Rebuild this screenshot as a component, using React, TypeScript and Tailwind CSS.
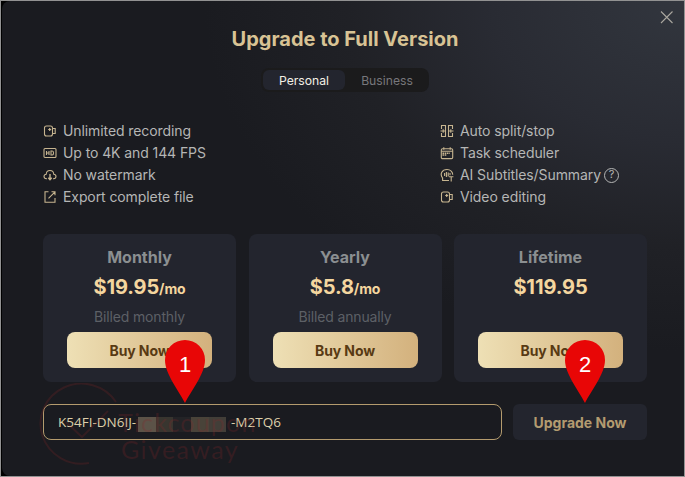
import type { ReactNode } from "react";

function Icon({ children }: { children: ReactNode }) {
  return (
    <svg width="14" height="14" viewBox="0 0 14 14" fill="none" stroke="#c7b590" strokeWidth="1.1" className="shrink-0">
      {children}
    </svg>
  );
}

const Recorder = () => (
  <Icon>
    <rect x="1.5" y="2" width="8" height="10" rx="2" />
    <path d="M9.5 4.5h2.7v5H9.5" />
    <path d="M6.7 4v3M5.2 5.5h3" strokeWidth="1.2" />
  </Icon>
);

const Hd = () => (
  <Icon>
    <rect x="1" y="2.5" width="12" height="9" rx="1" />
    <path d="M3.5 5v4M6 5v4M3.5 7H6M8 5h1.2c1.8 0 1.8 4 0 4H8z" />
  </Icon>
);

const Cloud = () => (
  <Icon>
    <path d="M4 10.8H3.4C.3 10.5.2 6.6 3.2 6.2c.3-5 7.2-5 7.6 0 3 .4 2.9 4.3-.2 4.6H10" />
    <path d="M7 6v5.5M5.3 9.7 7 11.6l1.7-1.9" strokeWidth="1.4" />
  </Icon>
);

const Export = () => (
  <Icon>
    <path d="M5.5 1.8H2v10.4h10V8M8.5 1.8H12v3.5M12 1.8 5.5 8.3" />
  </Icon>
);

const Split = () => (
  <Icon>
    <path d="M1.5 5V1.5h4v11h-4V9M12.5 5V1.5h-4v11h4V9M.5 7h5M13.5 7h-5M3.2 5.3v3.4M10.8 5.3v3.4" />
  </Icon>
);

const Calendar = () => (
  <Icon>
    <rect x="1.3" y="2.8" width="11.4" height="9.8" rx="1.2" />
    <path d="M1.3 5.2h11.4M3.8 1.2v2.6M10.2 1.2v2.6" />
    <path d="M2.5 7.2h7.3M2.5 9h4.4" strokeWidth="1.5" strokeDasharray="1.6 .6" />
  </Icon>
);

const Subtitles = () => (
  <Icon>
    <path d="M9 12.5H2.6V10C-.5 6 2 1.5 7 1.5c3.5 0 5.8 2.3 5.7 5.3M4.6 5v3M6.4 4v5M8.2 4.5v4M10 5v2.2M9 8.8h4.4M11.2 8.8v4.6" />
  </Icon>
);

function Feature({ icon, text, help }: { icon: ReactNode; text: string; help?: boolean }) {
  return (
    <li className="flex h-[22px] items-center">
      {icon}
      <span className="ml-[6px]">{text}</span>
      {help && (
        <span className="ml-[3px] flex size-[15px] items-center justify-center rounded-full border border-[#b5b6b5] text-[11px]">?</span>
      )}
    </li>
  );
}

function Plan({ name, price, unit, note }: { name: string; price: string; unit?: string; note?: string }) {
  return (
    <section className="flex h-[148px] w-[193px] flex-col items-center rounded-lg bg-[#23252e] pt-3">
      <h2 className="h-6 text-base leading-[22px] font-bold text-[#8b8f91]">{name}</h2>
      <p className="h-[34px] text-xl leading-[34px] font-bold tracking-[-0.1px] text-[#f4d69f]">
        {price}
        {unit && <span className="text-sm">{unit}</span>}
      </p>
      <p className="h-7 text-sm leading-[25px] tracking-[-0.15px] text-[#5d6066]">{note}</p>
      <button className="h-9 w-[145px] rounded-lg bg-linear-to-r from-[#eee0b5] to-[#d3b17d] pt-px text-sm font-bold tracking-[-0.1px] text-[#583a13]">
        Buy Now
      </button>
    </section>
  );
}

function Pin({ label, className }: { label: string; className: string }) {
  return (
    <div className={className}>
      <svg width="40" height="63" viewBox="0 0 40 63" className="absolute inset-0">
        <path d="M20 63C14 51 0 34 0 20a20 20 0 0 1 40 0C40 34 26 51 20 63Z" fill="#e80606" />
      </svg>
      <span className="relative">{label}</span>
    </div>
  );
}

function Watermark() {
  return (
    <div className="absolute top-[382px] left-[37px] h-[84px] w-[215px]">
      <svg width="84" height="84" viewBox="0 0 84 84" fill="none" stroke="#862629" strokeOpacity="0.23" strokeWidth="2">
        <path d="M77 19A41 40 0 1 0 50 80M27 39 43 54 69 28" />
      </svg>
      <span className="absolute top-[24px] left-[79px] font-['Lato',sans-serif] text-[25px] leading-[30px] tracking-[1.2px] text-[#862629]/25">
        Tickcoupon
      </span>
      <span className="absolute top-[51px] left-[82px] font-['Lato',sans-serif] text-[25px] leading-[30px] tracking-[1.4px] text-[#862629]/25">
        Giveaway
      </span>
    </div>
  );
}

export default function App() {
  return (
    <div className="h-[477px] w-[685px] border border-[#929292] bg-black font-['Inter',sans-serif]">
      <main className="relative ml-px flex h-full w-[682px] flex-col overflow-hidden rounded-l-lg bg-[#1a1b20] bg-[radial-gradient(ellipse_480px_350px_at_100%_0%,#32363e_0%,#292b33_40%,#202126_70%,#1a1b20_100%)] pl-[41px]">
        <svg width="14" height="14" viewBox="0 0 14 14" className="absolute top-[9px] right-[10px]" fill="none" stroke="#a9a69e" strokeWidth="1.1">
          <path d="M1 1.5 12.5 13M12.5 1.5 1 13" />
        </svg>
        <div className="flex w-[604px] flex-col items-center">
          <h1 className="mt-[23px] h-[30px] text-xl leading-[30px] font-bold text-[#d8c394]">Upgrade to Full Version</h1>
          <div className="mt-[14px] flex h-6 w-[168px] rounded-lg bg-[#1b1b1c] p-0.5 text-[12.2px] leading-[21px]">
            <span className="h-5 w-[82px] rounded-md bg-[#23252e] text-center text-[#f3efe5]">Personal</span>
            <span className="h-5 w-[82px] pl-0.5 text-center text-[#77777b]">Business</span>
          </div>
        </div>
        <div className="mt-[28px] flex w-full text-sm tracking-[-0.09px] text-[#b5b6b5]">
          <ul className="w-[397px]">
            <Feature icon={<Recorder />} text="Unlimited recording" />
            <Feature icon={<Hd />} text="Up to 4K and 144 FPS" />
            <Feature icon={<Cloud />} text="No watermark" />
            <Feature icon={<Export />} text="Export complete file" />
          </ul>
          <ul>
            <Feature icon={<Split />} text="Auto split/stop" />
            <Feature icon={<Calendar />} text="Task scheduler" />
            <Feature icon={<Subtitles />} text="AI Subtitles/Summary" help />
            <Feature icon={<Recorder />} text="Video editing" />
          </ul>
        </div>
        <div className="mt-[26px] flex w-[604px] justify-between">
          <Plan name="Monthly" price="$19.95" unit="/mo" note="Billed monthly" />
          <Plan name="Yearly" price="$5.8" unit="/mo" note="Billed annually" />
          <Plan name="Lifetime" price="$119.95" />
        </div>
        <div className="mt-[22px] flex w-[604px] justify-between">
          <div className="flex h-9 w-[459px] items-center rounded-lg border border-[#b49b6e] bg-[#1a1b20] pl-[14px] font-['Open_Sans',sans-serif] text-[13.5px] text-[#ddcfaa]">
            <span className="w-[80px] whitespace-nowrap">K54FI-DN6IJ-</span>
            <span className="mt-[5px] flex h-[15px] w-[93px]">
              <i className="w-[18px] bg-[#5c5348]" />
              <i className="w-[17px] bg-[#38352f]" />
              <i className="w-[18px] bg-[#232326]" />
              <i className="w-[18px] bg-[#494339]" />
              <i className="w-[17px] bg-[#423e38]" />
            </span>
            <span>-M2TQ6</span>
          </div>
          <button className="h-9 w-[134px] rounded-md bg-[#23252e] pt-px text-sm font-bold text-[#b39b70]">Upgrade Now</button>
        </div>
        <Watermark />
        <Pin label="1" className="absolute top-[339px] left-[163px] h-[63px] w-10 text-center font-['Liberation_Sans',sans-serif] text-[22px] leading-[50px] text-white" />
        <Pin label="2" className="absolute top-[339px] left-[563px] h-[63px] w-10 text-center font-['Liberation_Sans',sans-serif] text-[22px] leading-[50px] text-white" />
      </main>
    </div>
  );
}
